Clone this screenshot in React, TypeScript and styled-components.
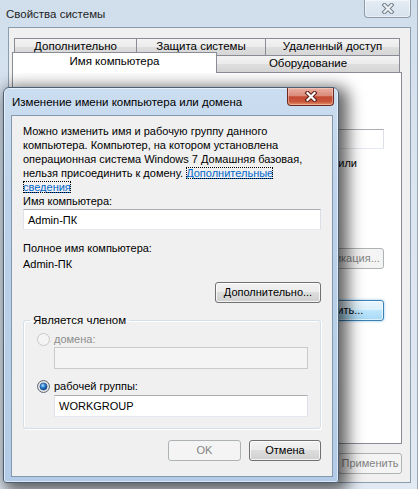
import React from "react";
import styled, { createGlobalStyle, css } from "styled-components";

const GlobalStyle = createGlobalStyle`
  html, body {
    margin: 0;
    padding: 0;
  }
  body {
    width: 418px;
    height: 489px;
    overflow: hidden;
    font-family: "Liberation Sans", Arial, sans-serif;
    font-size: 11px;
    color: #000;
    background: #dbe5f0;
  }
`;

const Desktop = styled.div`
  position: relative;
  width: 418px;
  height: 489px;
  overflow: hidden;
`;

/* ---------- parent window (Свойства системы) ---------- */

const ParentWindow = styled.div`
  width: 418px;
  height: 489px;
  box-sizing: border-box;
  display: flex;
  flex-direction: column;
  border-right: 1px solid #9aa8b8;
  background: linear-gradient(180deg, #d0deec 0%, #dbe5f0 35%, #e1e9f2 100%);
`;

const ParentTitleBar = styled.div`
  height: 27px;
  flex: none;
  display: flex;
  align-items: flex-start;
  justify-content: space-between;
  padding: 0 6px 0 6px;
`;

const TitleText = styled.div<{ $inactive?: boolean }>`
  align-self: center;
  font-size: 11.5px;
  color: ${(p) => (p.$inactive ? "#1e1e1e" : "#000")};
  white-space: nowrap;
`;

const CaptionClose = styled.div<{ $active?: boolean }>`
  width: 47px;
  height: 18px;
  box-sizing: border-box;
  display: flex;
  align-items: center;
  justify-content: center;
  border-radius: 0 0 4px 4px;
  ${(p) =>
    p.$active
      ? css`
          border: 1px solid #6b2a21;
          border-top: none;
          background: linear-gradient(
            180deg,
            #eab0a2 0%,
            #db8b79 45%,
            #c34a32 52%,
            #c9563c 80%,
            #e4946a 100%
          );
          box-shadow: inset 0 0 0 1px rgba(255, 220, 210, 0.45);
        `
      : css`
          border: 1px solid #8f9aa8;
          border-top: none;
          background: linear-gradient(180deg, rgba(255, 255, 255, 0.45), rgba(220, 230, 240, 0.35));
          box-shadow: inset 0 0 0 1px rgba(255, 255, 255, 0.5);
        `}
`;

const ParentBody = styled.div`
  flex: 1;
  display: flex;
  padding: 0 6px 6px 8px;
  min-height: 0;
`;

const ParentClient = styled.div`
  flex: 1;
  display: flex;
  flex-direction: column;
  box-sizing: border-box;
  background: #f0f0f0;
  border: 1px solid #8d9db0;
  padding: 10px 8px 0 3px;
`;

const TabRow = styled.div<{ $indent: number }>`
  display: flex;
  align-items: flex-end;
  height: 17px;
  padding-left: ${(p) => p.$indent}px;
`;

const Tab = styled.div<{ $w: number; $selected?: boolean }>`
  width: ${(p) => p.$w}px;
  box-sizing: border-box;
  border: 1px solid #898c95;
  border-bottom: none;
  text-align: center;
  white-space: nowrap;
  font-size: 11.5px;
  & + & {
    margin-left: -1px;
  }
  ${(p) =>
    p.$selected
      ? css`
          position: relative;
          z-index: 1;
          height: 21px;
          margin-bottom: -1px;
          background: #fff;
          line-height: 17px;
        `
      : css`
          height: 17px;
          line-height: 15px;
          background: linear-gradient(180deg, #f3f3f3 0%, #ebebeb 50%, #dedede 51%, #d6d6d6 100%);
        `}
`;

const TabPanel = styled.div`
  height: 372px;
  box-sizing: border-box;
  border: 1px solid #898c95;
  background: #fff;
  display: flex;
  flex-direction: column;
  align-items: flex-end;
  padding-right: 17px;
`;

const DescriptionField = styled.div`
  margin-top: 56px;
  width: 240px;
  height: 20px;
  box-sizing: border-box;
  border: 1px solid;
  border-color: #abadb3 #dbdfe6 #e3e9ef #e2e3ea;
  background: #fff;
`;

const HintText = styled.div`
  margin-top: 7px;
  margin-right: 27px;
  line-height: 14px;
  white-space: nowrap;
`;

const ApplyRow = styled.div`
  display: flex;
  justify-content: flex-end;
  margin-top: 9px;
`;

/* ---------- shared controls ---------- */

type ButtonKind = "normal" | "disabled" | "focus";

const Button = styled.div<{ $w: number; $kind?: ButtonKind; $top?: number }>`
  width: ${(p) => p.$w}px;
  height: 21px;
  box-sizing: border-box;
  flex: none;
  margin-top: ${(p) => p.$top ?? 0}px;
  border-radius: 3px;
  text-align: center;
  line-height: 19px;
  white-space: nowrap;
  overflow: hidden;
  ${(p) =>
    p.$kind === "disabled"
      ? css`
          border: 1px solid #adb2b5;
          background: #f4f4f4;
          color: #838383;
        `
      : p.$kind === "focus"
      ? css`
          border: 1px solid #3c7fb1;
          background: linear-gradient(180deg, #eaf6fd 0%, #d9f0fc 49%, #bee6fd 50%, #a7d9f5 100%);
          box-shadow: inset 0 0 0 1px rgba(255, 255, 255, 0.6), 0 0 3px rgba(60, 160, 230, 0.6);
          color: #000;
        `
      : css`
          border: 1px solid #707070;
          background: linear-gradient(180deg, #f2f2f2 0%, #ebebeb 49%, #dddddd 50%, #cfcfcf 100%);
          box-shadow: inset 0 0 0 1px rgba(255, 255, 255, 0.75);
          color: #000;
        `}
`;

const TextBox = styled.div<{ $disabled?: boolean; $h?: number }>`
  height: ${(p) => p.$h ?? 21}px;
  box-sizing: border-box;
  padding-left: 4px;
  display: flex;
  align-items: center;
  white-space: nowrap;
  border: 1px solid;
  ${(p) =>
    p.$disabled
      ? css`
          border-color: #cacaca;
          background: #f4f4f4;
        `
      : css`
          border-color: #abadb3 #dbdfe6 #e3e9ef #e2e3ea;
          background: #fff;
        `}
`;

/* ---------- child dialog ---------- */

const Dialog = styled.div`
  position: absolute;
  left: 3px;
  top: 87px;
  width: 336px;
  height: 396px;
  box-sizing: border-box;
  display: flex;
  flex-direction: column;
  padding: 0 5px 5px 7px;
  border: 1px solid #4d5f73;
  border-radius: 6px 6px 3px 3px;
  background: linear-gradient(180deg, #cbddf0 0%, #bcd2ea 30%, #b3cbe6 100%);
  box-shadow: 5px 4px 16px 4px rgba(0, 0, 0, 0.62), inset 0 0 0 1px rgba(255, 255, 255, 0.55);
`;

const DialogTitleBar = styled.div`
  height: 27px;
  flex: none;
  display: flex;
  align-items: flex-start;
  justify-content: space-between;
  padding-left: 1px;
  margin-right: -1px;
`;

const DialogClient = styled.div`
  flex: 1;
  box-sizing: border-box;
  display: flex;
  flex-direction: column;
  background: #f0f0f0;
  border: 1px solid #8497ad;
  padding: 8px 11px 0 11px;
`;

const Intro = styled.div`
  line-height: 14px;
  white-space: nowrap;
`;

const Link = styled.span`
  color: #0066cc;
  text-decoration: underline;
  outline: 1px dotted #000;
  outline-offset: -1px;
`;

const Label = styled.div<{ $top?: number }>`
  line-height: 14px;
  margin-top: ${(p) => p.$top ?? 0}px;
  white-space: nowrap;
`;

const FieldGap = styled.div<{ $top: number; $indent?: number }>`
  margin-top: ${(p) => p.$top}px;
  margin-left: ${(p) => p.$indent ?? 0}px;
`;

const RightRow = styled.div<{ $top: number }>`
  display: flex;
  justify-content: flex-end;
  gap: 8px;
  margin-top: ${(p) => p.$top}px;
`;

const GroupBox = styled.fieldset`
  margin: 10px 0 0 0;
  padding: 5px 12px 11px 13px;
  border: 1px solid #d5dfe5;
  border-radius: 3px;
  box-shadow: inset 1px 1px 0 #fff, 1px 1px 0 #fff;
  min-width: 0;
`;

const GroupLegend = styled.legend`
  padding: 0 3px;
  margin-left: -7px;
  line-height: 14px;
  font-size: 11.5px;
`;

const RadioRow = styled.div<{ $top?: number; $disabled?: boolean }>`
  display: flex;
  align-items: center;
  gap: 4px;
  height: 14px;
  margin-top: ${(p) => p.$top ?? 0}px;
  color: ${(p) => (p.$disabled ? "#8d8d8d" : "#000")};
  white-space: nowrap;
`;

/* ---------- drawings ---------- */

const CloseGlyph = ({ active }: { active?: boolean }) => (
  <svg width="14" height="11" viewBox="0 0 14 11">
    <path
      d="M3.5 2 L10.5 9 M10.5 2 L3.5 9"
      stroke={active ? "#5b1e16" : "#74808d"}
      strokeWidth="4.2"
      strokeLinecap="square"
      fill="none"
    />
    <path
      d="M3.5 2 L10.5 9 M10.5 2 L3.5 9"
      stroke={active ? "#ffffff" : "#eef1f4"}
      strokeWidth="2.2"
      strokeLinecap="square"
      fill="none"
    />
  </svg>
);

const RadioIcon = ({ checked, disabled }: { checked?: boolean; disabled?: boolean }) => (
  <svg width="13" height="13" viewBox="0 0 13 13">
    <defs>
      <radialGradient id="rbOn" cx="0.5" cy="0.5" r="0.6">
        <stop offset="0" stopColor="#ffffff" />
        <stop offset="1" stopColor="#d6d6d6" />
      </radialGradient>
      <radialGradient id="rbDot" cx="0.4" cy="0.35" r="0.65">
        <stop offset="0" stopColor="#b9e4ff" />
        <stop offset="0.45" stopColor="#2f86d6" />
        <stop offset="1" stopColor="#0c3f7e" />
      </radialGradient>
    </defs>
    {disabled ? (
      <circle cx="6.5" cy="6.5" r="6" fill="#f4f4f4" stroke="#c8c8c8" />
    ) : (
      <circle cx="6.5" cy="6.5" r="6" fill="url(#rbOn)" stroke="#5e6a76" />
    )}
    {checked && <circle cx="6.5" cy="6.5" r="3.6" fill="url(#rbDot)" stroke="#1d4f86" strokeWidth="0.6" />}
  </svg>
);

export default function App() {
  return (
    <Desktop>
      <GlobalStyle />
      <ParentWindow>
        <ParentTitleBar>
          <TitleText $inactive>Свойства системы</TitleText>
          <CaptionClose>
            <CloseGlyph />
          </CaptionClose>
        </ParentTitleBar>
        <ParentBody>
          <ParentClient>
            <TabRow $indent={2}>
              <Tab $w={123}>Дополнительно</Tab>
              <Tab $w={130}>Защита системы</Tab>
              <Tab $w={135}>Удаленный доступ</Tab>
            </TabRow>
            <TabRow $indent={0}>
              <Tab $w={205} $selected>
                Имя компьютера
              </Tab>
              <Tab $w={184}>Оборудование</Tab>
            </TabRow>
            <TabPanel>
              <DescriptionField />
              <HintText>Например: "Компьютер в гостиной" или</HintText>
              <Button $w={100} $kind="disabled" $top={78}>
                Идентификация...
              </Button>
              <Button $w={100} $kind="focus" $top={31}>
                Изменить...
              </Button>
            </TabPanel>
            <ApplyRow>
              <Button $w={64} $kind="disabled">
                Применить
              </Button>
            </ApplyRow>
          </ParentClient>
        </ParentBody>
      </ParentWindow>

      <Dialog>
        <DialogTitleBar>
          <TitleText>Изменение имени компьютера или домена</TitleText>
          <CaptionClose $active>
            <CloseGlyph active />
          </CaptionClose>
        </DialogTitleBar>
        <DialogClient>
          <Intro>
            Можно изменить имя и рабочую группу данного
            <br />
            компьютера. Компьютер, на котором установлена
            <br />
            операционная система Windows 7 Домашняя базовая,
            <br />
            нельзя присоединить к домену. <Link>Дополнительные</Link>
            <br />
            <Link>сведения</Link>
          </Intro>
          <Label>Имя компьютера:</Label>
          <FieldGap $top={1}>
            <TextBox>Admin-ПК</TextBox>
          </FieldGap>
          <Label $top={11}>Полное имя компьютера:</Label>
          <Label $top={2}>Admin-ПК</Label>
          <RightRow $top={11}>
            <Button $w={106}>Дополнительно...</Button>
          </RightRow>
          <GroupBox>
            <GroupLegend>Является членом</GroupLegend>
            <RadioRow $disabled>
              <RadioIcon disabled />
              домена:
            </RadioRow>
            <FieldGap $top={1} $indent={17}>
              <TextBox $disabled $h={22} />
            </FieldGap>
            <RadioRow $top={10}>
              <RadioIcon checked />
              рабочей группы:
            </RadioRow>
            <FieldGap $top={2} $indent={17}>
              <TextBox $h={22}>WORKGROUP</TextBox>
            </FieldGap>
          </GroupBox>
          <RightRow $top={11}>
            <Button $w={73} $kind="disabled">
              OK
            </Button>
            <Button $w={72}>Отмена</Button>
          </RightRow>
        </DialogClient>
      </Dialog>
    </Desktop>
  );
}
